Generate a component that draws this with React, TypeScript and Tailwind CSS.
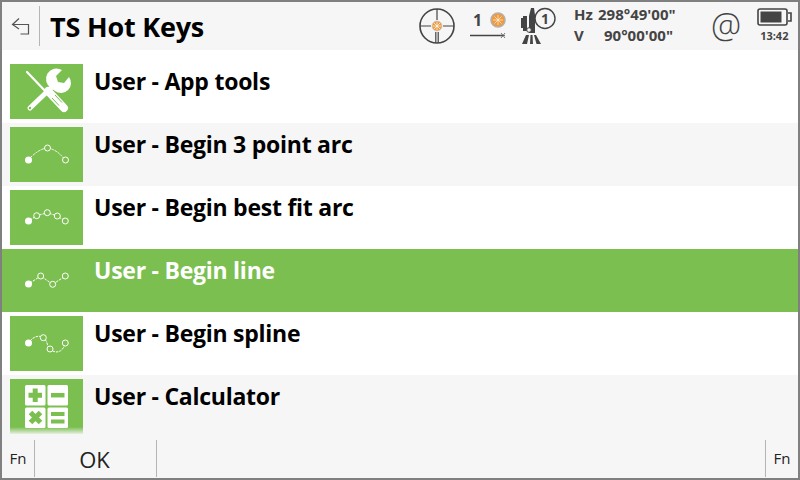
import React from "react";

const font = "font-['Open_Sans','Noto_Sans',sans-serif]";

const ToolsIcon = () => (
  <svg width="73" height="55" viewBox="0 0 73 55" fill="none">
    {/* screwdriver blade from top left, wrench from top right */}
    <path d="M17 8 L38 30" stroke="#fff" strokeWidth="2.2" strokeLinecap="round" />
    <path d="M38 27 L54 44" stroke="#fff" strokeWidth="8" strokeLinecap="round" />
    <path d="M45 31 L52 38.5 M42 34 L49 41.5" stroke="#7abf50" strokeWidth="1" />
    <path d="M20 44 L43 22" stroke="#fff" strokeWidth="5" strokeLinecap="round" />
    <circle cx="20" cy="44" r="1.2" fill="#7abf50" />
    <path d="M41 24 A10 10 0 0 1 52 6 L46 12 L48 18 L54 19 L59 13 A10 10 0 0 1 45 27 Z" fill="#fff" />
  </svg>
);

const Dots = ({ d, start, circles }: { d: string; start: number; circles: number[][] }) => (
  <svg width="73" height="55" viewBox="0 0 73 55" fill="none">
    <path d={d} stroke="#fff" strokeWidth="1" strokeDasharray="2.5 1" />
    <circle cx="18.5" cy={start} r="3.5" fill="#fff" />
    {circles.map(([x, y], i) => (
      <circle key={i} cx={x} cy={y} r="3" stroke="#fff" strokeWidth="1" fill="#7abf50" />
    ))}
  </svg>
);

const CalcIcon = () => (
  <svg width="73" height="55" viewBox="0 0 73 55" fill="none">
    <rect x="15" y="6" width="20.5" height="20.5" rx="1.5" fill="#fff" />
    <rect x="37.5" y="6" width="20.5" height="20.5" rx="1.5" fill="#fff" />
    <rect x="15" y="28.5" width="20.5" height="20.5" rx="1.5" fill="#fff" />
    <rect x="37.5" y="28.5" width="20.5" height="20.5" rx="1.5" fill="#fff" />
    <path d="M25.2 9.5v13.5M18.5 16.2h13.5" stroke="#7abf50" strokeWidth="5" />
    <path d="M41 16.2h13.5" stroke="#7abf50" strokeWidth="4.5" />
    <path d="M20.5 33.5l10 10M30.5 33.5l-10 10" stroke="#7abf50" strokeWidth="5" />
    <path d="M41 35h13.5M41 42.5h13.5" stroke="#7abf50" strokeWidth="4" />
  </svg>
);

const rows = [
  { label: "User - App tools", icon: <ToolsIcon /> },
  {
    label: "User - Begin 3 point arc",
    icon: <Dots start={33} d="M20 31 Q29 22 37 21 Q47 22 55 33" circles={[[37.5, 21], [55.5, 33]]} />,
  },
  {
    label: "User - Begin best fit arc",
    icon: (
      <Dots
        start={31}
        d="M20 30 L26.7 25.7 L37.3 22.7 L47.3 26 L55.3 31"
        circles={[[26.7, 25.7], [37.3, 22.7], [47.3, 26], [55.3, 31]]}
      />
    ),
  },
  {
    label: "User - Begin line",
    selected: true,
    icon: (
      <Dots
        start={31}
        d="M20 30 L30.7 23 L42.7 31.3 L55.3 23"
        circles={[[30.7, 23], [42.7, 31.3], [55.3, 23]]}
      />
    ),
  },
  {
    label: "User - Begin spline",
    icon: (
      <Dots
        start={27}
        d="M20 25 C24 20 30 19 33.3 21.7 C38 25 37 31 40 33 C45 38 53 37 55.3 27"
        circles={[[33.3, 21.7], [40, 33], [55.3, 27]]}
      />
    ),
  },
  { label: "User - Calculator", icon: <CalcIcon /> },
];

const Row = ({ row, even }: { row: (typeof rows)[number]; even: boolean }) => (
  <div
    className={`flex h-[63px] shrink-0 items-start pl-2 ${
      row.selected ? "bg-[#7abf50] text-white" : even ? "bg-[#f6f6f6] text-black" : "bg-white text-black"
    }`}
  >
    <div className="mt-1 h-[55px] w-[73px] shrink-0 bg-[#7abf50]">{row.icon}</div>
    <div className="ml-[11px] mt-[3px] text-[23px] font-bold leading-[36px] tracking-[-0.25px]">{row.label}</div>
  </div>
);

const Target = () => (
  <svg width="38" height="38" viewBox="0 0 38 38" fill="none">
    <circle cx="19" cy="19" r="17" stroke="#444" strokeWidth="1.6" />
    <path d="M19 2v11M2 19h11M25 19h11M17.8 25v11M20.2 25v11" stroke="#444" strokeWidth="1.2" />
    <circle cx="19" cy="19" r="5" fill="#ef9a3c" stroke="#ccc" strokeWidth="0.8" />
    <path d="M19 15v8M15 19h8M16 16l6 6M22 16l-6 6" stroke="#fff" strokeWidth="0.7" />
  </svg>
);

const Prism = () => (
  <svg width="16" height="16" viewBox="0 0 16 16" fill="none">
    <circle cx="8" cy="8" r="7" fill="#ef9a3c" stroke="#b5b0a8" strokeWidth="1.6" />
    <path d="M8 3v10M3 8h10M4.5 4.5l7 7M11.5 4.5l-7 7" stroke="#fff" strokeWidth="0.6" />
  </svg>
);

const Tripod = () => (
  <svg width="36" height="38" viewBox="0 0 36 38" fill="none">
    <path d="M8 9 L10 1 H13 L14 8 V26 H8 Z" fill="#444" />
    <path d="M0 11 H2 V9 H6 V24 H2 V21 H0 Z" fill="#444" />
    <circle cx="8" cy="23" r="2.3" fill="#f6f6f6" stroke="#444" />
    <path d="M5 28 H8 L6 37 H1 Z M9.5 28 H11.5 L12 37 H9 Z M13 28 H15 L20 37 H15.5 Z" fill="#444" />
    <circle cx="24" cy="11.5" r="10" fill="#f6f6f6" stroke="#444" strokeWidth="1.4" />
    <text x="24" y="16.5" textAnchor="middle" fontSize="14" fontWeight="700" fill="#444" fontFamily="Open Sans">
      1
    </text>
  </svg>
);

const Battery = () => (
  <svg width="36" height="18" viewBox="0 0 36 18" fill="none">
    <rect x="1" y="1" width="29" height="16" rx="2" stroke="#444" strokeWidth="1.6" />
    <rect x="3.5" y="3.5" width="21" height="11" fill="#444" />
    <path d="M31 5h3v8h-3" stroke="#444" strokeWidth="1.6" />
  </svg>
);

export default function App() {
  return (
    <div className={`${font} flex h-[480px] w-[800px] flex-col overflow-hidden border-2 border-[#808080] bg-white`}>
      <header className="flex h-[48px] shrink-0 items-center bg-[#f6f6f6] text-[#444]">
        <div className="flex w-[37px] shrink-0 justify-center pl-[1px] pt-[1px]">
          <svg width="20" height="20" viewBox="0 0 20 20" fill="none" stroke="#555" strokeWidth="1.2">
            <path d="M8 1.5 L1.5 7.5 L8 12" />
            <path d="M1.5 7.5 H17.5 V17 H9.5" />
          </svg>
        </div>
        <div className="h-10 w-px bg-[#b5b5b5]" />
        <h1 className="ml-[10px] w-[158px] whitespace-nowrap text-[27px] font-bold leading-none tracking-[-0.2px] text-black">
          TS Hot Keys
        </h1>
        <div className="ml-[210px] mt-[-1px]">
          <Target />
        </div>
        <div className="ml-[14px] mt-[-1px] flex w-[36px] flex-col">
          <div className="flex items-center justify-between pl-[3px]">
            <span className="text-[16px] font-bold leading-none">1</span>
            <Prism />
          </div>
          <svg width="36" height="7" viewBox="0 0 36 7" className="mt-1" fill="none">
            <path d="M0 3.5h33" stroke="#444" strokeWidth="1.4" />
            <path d="M31 1l4 5M35 1l-4 5M30 3.5h5" stroke="#555" strokeWidth="0.8" />
          </svg>
        </div>
        <div className="ml-[15px]">
          <Tripod />
        </div>
        <div className="ml-[17px] mt-[-3px] w-[112px] whitespace-nowrap text-[15px] font-bold leading-[21px]">
          <div className="flex">
            <span className="w-[24px]">Hz</span>
            <span>298°49'00"</span>
          </div>
          <div className="flex">
            <span className="w-[24px]">V</span>
            <span className="ml-[6px]">90°00'00"</span>
          </div>
        </div>
        <div className="ml-[25px] mt-[-3px] text-[34px] font-light leading-none">@</div>
        <div className="ml-[16px] mt-[-2px] flex flex-col items-start">
          <Battery />
          <div className="ml-[3px] mt-[3px] text-[11px] font-bold leading-[14px]">13:42</div>
        </div>
      </header>
      <main className="relative flex flex-1 flex-col overflow-hidden pt-[10px]">
        {rows.map((row, i) => (
          <Row key={row.label} row={row} even={i % 2 === 1} />
        ))}
        <div className="absolute left-0 right-0 top-[10px] h-1 bg-gradient-to-b from-white to-transparent" />
        <div className="absolute bottom-0 left-0 right-0 h-2 bg-gradient-to-t from-[#f6f6f6] to-transparent" />
      </main>
      <footer className="flex h-[43px] shrink-0 items-stretch bg-[#f6f6f6] pt-[5px] pb-px text-[#222]">
        <div className="flex w-[32px] items-center justify-center text-[15px]">Fn</div>
        <div className="w-px bg-[#b5b5b5]" />
        <div className="flex w-[121px] items-center justify-center pr-[2px] text-[22px] leading-none">OK</div>
        <div className="w-px bg-[#b5b5b5]" />
        <div className="flex-1" />
        <div className="w-px bg-[#b5b5b5]" />
        <div className="flex w-[32px] items-center justify-center text-[15px]">Fn</div>
      </footer>
    </div>
  );
}
